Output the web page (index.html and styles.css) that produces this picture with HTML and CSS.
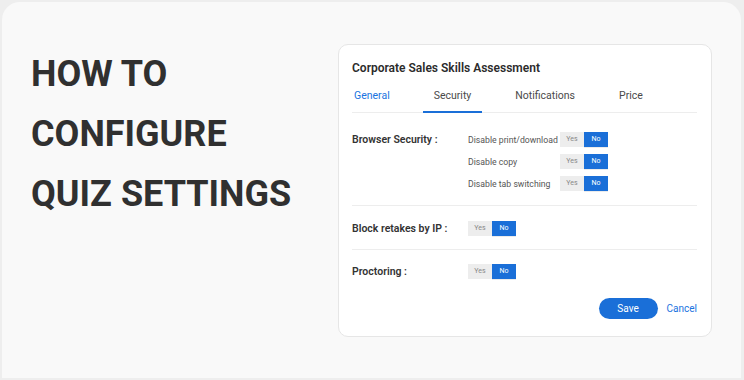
FILE: index.html
```html
<!DOCTYPE html>
<html lang="en">
<head>
  <meta charset="UTF-8" />
  <meta name="viewport" content="width=device-width, initial-scale=1.0"/>
  <title>How to configure quiz settings</title>
  <link rel="stylesheet" href="styles.css">
</head>
<body>
  <div class="frame">
    <h1 class="headline">HOW TO<br>CONFIGURE<br>QUIZ SETTINGS</h1>

    <div class="card">
      <h2 class="card-title">Corporate Sales Skills Assessment</h2>

      <div class="tabs">
        <span class="tab tab-link">General</span>
        <span class="tab active">Security</span>
        <span class="tab">Notifications</span>
        <span class="tab">Price</span>
      </div>

      <div class="section first">
        <div class="label">Browser Security :</div>
        <div class="options">
          <div class="option">
            <span class="option-name">Disable print/download</span>
            <div class="toggle"><span class="yes">Yes</span><span class="no">No</span></div>
          </div>
          <div class="option">
            <span class="option-name">Disable copy</span>
            <div class="toggle"><span class="yes">Yes</span><span class="no">No</span></div>
          </div>
          <div class="option">
            <span class="option-name">Disable tab switching</span>
            <div class="toggle"><span class="yes">Yes</span><span class="no">No</span></div>
          </div>
        </div>
      </div>

      <div class="section">
        <div class="label">Block retakes by IP :</div>
        <div class="toggle"><span class="yes">Yes</span><span class="no">No</span></div>
      </div>

      <div class="section last">
        <div class="label">Proctoring :</div>
        <div class="toggle"><span class="yes">Yes</span><span class="no">No</span></div>
      </div>

      <div class="actions">
        <button class="save-btn">Save</button>
        <span class="cancel">Cancel</span>
      </div>
    </div>
  </div>
</body>
</html>
```

FILE: styles.css
```css
body {
  margin: 0;
  background-color: #eeeeee;
  font-family: Roboto, "Liberation Sans", sans-serif;
  color: #333333;
}

.frame {
  margin: 2px 3px 0 2px;
  height: 376px;
  box-sizing: border-box;
  background-color: #f9f9f9;
  border-radius: 18px 18px 0 0;
  display: flex;
  justify-content: space-between;
  align-items: flex-start;
  padding: 42px 29px 0 29px;
}

.headline {
  margin: 0;
  font-size: 36px;
  line-height: 60px;
  font-weight: 700;
  color: #303030;
}

.card {
  width: 374px;
  box-sizing: border-box;
  background-color: #ffffff;
  border: 1px solid #e6e6e6;
  border-radius: 10px;
  padding: 15px 14px 17px 13px;
}

.card-title {
  margin: 0;
  font-size: 12px;
  line-height: 16px;
  font-weight: 600;
  color: #2b2b2b;
}

.tabs {
  display: flex;
  gap: 22px;
  margin: 13px 0 0 0;
  border-bottom: 1px solid #ededed;
}

.tab {
  font-size: 10.5px;
  line-height: 14px;
  color: #4a4a4a;
  padding: 0 11px 8px;
  margin-bottom: -1px;
  border-bottom: 2px solid transparent;
}

.tab:first-child {
  margin-left: -9px;
}

.tab-link {
  color: #1a73e0;
}

.tab.active {
  border-bottom-color: #1a6fd8;
}

.section {
  display: flex;
  align-items: center;
  padding: 15px 0 13px;
  border-bottom: 1px solid #ededed;
}

.section.first {
  align-items: flex-start;
  padding: 19px 0 14px;
}

.section.last {
  border-bottom: none;
  padding: 14px 0 0;
}

.label {
  width: 116px;
  flex-shrink: 0;
  font-size: 10.5px;
  line-height: 15px;
  font-weight: 600;
  color: #333333;
}

.options {
  display: flex;
  flex-direction: column;
  gap: 7px;
}

.option {
  display: flex;
  align-items: center;
}

.option-name {
  width: 92px;
  flex-shrink: 0;
  white-space: nowrap;
  font-size: 8.7px;
  color: #555555;
}

.toggle {
  display: flex;
  height: 15px;
  font-size: 7px;
  line-height: 15px;
  text-align: center;
}

.toggle span {
  width: 24px;
}

.toggle .yes {
  background-color: #ededed;
  color: #888888;
}

.toggle .no {
  background-color: #1a6fd8;
  color: #ffffff;
  box-shadow: 0 1px 0 rgba(0, 0, 0, 0.08);
}

.actions {
  display: flex;
  justify-content: flex-end;
  align-items: center;
  gap: 9px;
  margin-top: 19px;
}

.save-btn {
  width: 59px;
  height: 21px;
  border: none;
  border-radius: 11px;
  background-color: #1a6fd8;
  color: #ffffff;
  font-family: Roboto, "Liberation Sans", sans-serif;
  font-size: 10px;
  padding: 0;
}

.cancel {
  font-size: 10px;
  color: #1a73e0;
}
```
